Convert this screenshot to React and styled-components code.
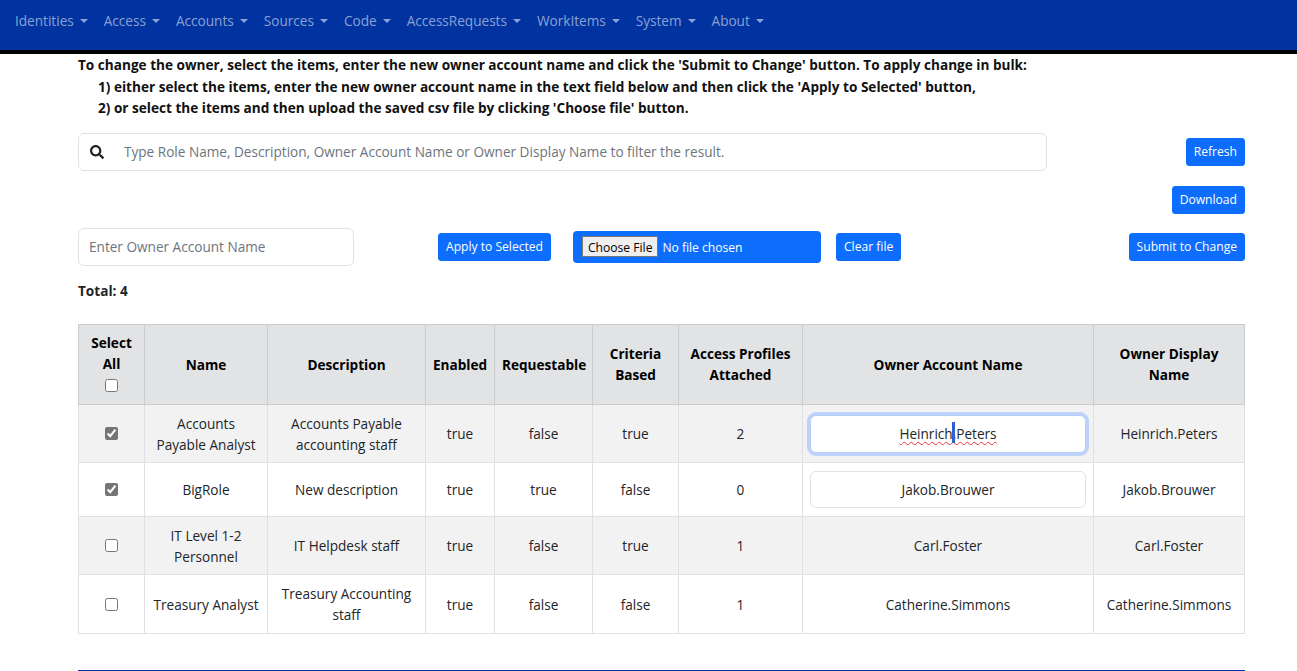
import React from 'react';
import styled, { createGlobalStyle } from 'styled-components';
import { FaSearch } from 'react-icons/fa';

const colors = {
  navy: '#0033a0',
  primary: '#0d6efd',
  text: '#212529',
  border: '#dee2e6',
  inputBorder: '#dee2e6',
  placeholder: '#6c757d',
  headBg: '#e2e3e5',
  headBorder: '#cbccce',
  stripe: '#f2f2f2',
};

const font = '"Open Sans", "Noto Sans", sans-serif';

const GlobalStyle = createGlobalStyle`
  html, body { margin: 0; padding: 0; background: #fff; }
  body {
    font-family: ${font};
    font-size: 13.6px;
    line-height: 21px;
    color: ${colors.text};
    overflow: hidden;
  }
  * { box-sizing: border-box; }
`;

const Navbar = styled.nav`
  height: 54px;
  background: ${colors.navy};
  border-bottom: 4px solid #000;
  display: flex;
  align-items: flex-start;
  padding: 10px 7px 0;
`;

const NavLink = styled.a`
  color: rgba(255, 255, 255, .55);
  padding: 0 8px;
  display: flex;
  align-items: center;
  &::after {
    content: '';
    margin-left: 6px;
    border-top: 4px solid;
    border-left: 4px solid transparent;
    border-right: 4px solid transparent;
  }
`;

const Page = styled.main`
  padding: 0 52px 0 78px;
`;

const Intro = styled.div`
  font-weight: 700;
  color: #111;
  line-height: 21.5px;
`;

const IntroStep = styled.div`
  padding-left: 20px;
`;

const SearchRow = styled.div`
  display: flex;
  justify-content: space-between;
  align-items: center;
  margin-top: 14px;
  height: 38px;
`;

const SearchGroup = styled.div`
  width: 969px;
  height: 38px;
  display: flex;
  align-items: center;
  border: 1px solid ${colors.inputBorder};
  border-radius: 6px;
`;

const SearchIcon = styled.span`
  width: 45px;
  display: flex;
  padding-left: 11px;
  color: ${colors.text};
  font-size: 14px;
`;

const TextInput = styled.input`
  font: inherit;
  color: ${colors.text};
  border: 0;
  padding: 0;
  outline: 0;
  background: transparent;
  flex: 1;
  min-width: 0;
  &::placeholder { color: ${colors.placeholder}; opacity: 1; }
`;

const Button = styled.button`
  font: inherit;
  font-size: 12.1px;
  height: 28px;
  line-height: 26px;
  padding: 0 7px;
  color: #fff;
  background: ${colors.primary};
  border: 1px solid ${colors.primary};
  border-radius: 3px;
  white-space: nowrap;
  margin-left: ${p => p.$left || 0}px;
`;

const DownloadRow = styled.div`
  display: flex;
  justify-content: flex-end;
  margin-top: 15px;
`;

const ActionRow = styled.div`
  display: flex;
  align-items: center;
  margin-top: 14px;
  height: 38px;
`;

const OwnerInput = styled.input`
  font: inherit;
  width: 276px;
  height: 38px;
  padding: 0 10px;
  color: ${colors.text};
  border: 1px solid ${colors.inputBorder};
  border-radius: 6px;
  outline: 0;
  &::placeholder { color: ${colors.placeholder}; opacity: 1; }
`;

const FileBox = styled.div`
  width: 248px;
  height: 32px;
  margin-left: 22px;
  padding: 0 9px;
  display: flex;
  align-items: center;
  background: ${colors.primary};
  border-radius: 4px;
`;

const FileInput = styled.input`
  font: inherit;
  font-size: 12.1px;
  color: #fff;
  width: 100%;
  &::file-selector-button {
    font: inherit;
    height: 21px;
    padding: 0 5px;
    margin-right: 4px;
    color: #000;
    background: #efefef;
    border: 1px solid #767676;
  }
`;

const Spacer = styled.div`
  flex: 1;
`;

const Total = styled.div`
  font-weight: 700;
  margin-top: 14px;
`;

const Table = styled.table`
  width: 1166px;
  margin-top: 23px;
  border-collapse: collapse;
  table-layout: fixed;
  text-align: center;
`;

const HeadRow = styled.tr`
  height: 80px;
`;

const HeadCell = styled.th`
  background: ${colors.headBg};
  border: 1px solid ${colors.headBorder};
  color: #000;
  font-weight: 700;
  padding: 0 7px;
  vertical-align: middle;
`;

const Row = styled.tr`
  height: ${p => p.$h}px;
  background: ${p => (p.$striped ? colors.stripe : '#fff')};
`;

const Cell = styled.td`
  border: 1px solid ${colors.border};
  padding: 1px 8px 0;
  vertical-align: middle;
`;

const Check = styled.input.attrs({ type: 'checkbox' })`
  display: block;
  width: 13px;
  height: 13px;
  margin: 3px auto;
  accent-color: #757575;
`;

const HeadCheck = styled(Check)`
  margin: 4.5px auto;
`;

const CellInput = styled.input`
  font: inherit;
  display: block;
  width: 276px;
  height: 37px;
  margin: 0 0 0 -1px;
  padding: 0;
  text-align: center;
  color: ${colors.text};
  border: 1px solid ${colors.inputBorder};
  border-radius: 6px;
  outline: 0;
`;

const FocusedInput = styled.div`
  position: relative;
  width: 276px;
  height: 38px;
  margin: 0 0 0 -1px;
  text-align: center;
  line-height: 36px;
  background: #fff;
  border: 1px solid #b5cffa;
  border-radius: 6px;
  box-shadow: 0 0 0 3px #bdd3f9;
`;

const Misspelled = styled.span`
  position: relative;
  text-decoration: underline wavy #e33;
  text-decoration-thickness: 1px;
  text-underline-offset: 2px;
`;

const Caret = styled.span`
  position: absolute;
  left: 53px;
  top: -2px;
  width: 3px;
  height: 21px;
  background: #2f5fd0;
`;

const FooterLine = styled.div`
  margin-top: 36px;
  height: 2px;
  background: ${colors.navy};
`;

const navItems = ['Identities', 'Access', 'Accounts', 'Sources', 'Code', 'AccessRequests', 'WorkItems', 'System', 'About'];

const columns = [66, 123, 158, 69, 98, 86, 124, 291, 151];

const headers = [
  'Name',
  'Description',
  'Enabled',
  'Requestable',
  'Criteria Based',
  'Access Profiles Attached',
  'Owner Account Name',
  'Owner Display Name',
];

const rows = [
  { name: 'Accounts Payable Analyst', desc: 'Accounts Payable accounting staff', enabled: 'true', requestable: 'false', criteria: 'true', profiles: 2, owner: 'Heinrich.Peters', checked: true, focused: true, h: 58 },
  { name: 'BigRole', desc: 'New description', enabled: 'true', requestable: 'true', criteria: 'false', profiles: 0, owner: 'Jakob.Brouwer', checked: true, editing: true, h: 54 },
  { name: 'IT Level 1-2 Personnel', desc: 'IT Helpdesk staff', enabled: 'true', requestable: 'false', criteria: 'true', profiles: 1, owner: 'Carl.Foster', h: 58 },
  { name: 'Treasury Analyst', desc: 'Treasury Accounting staff', enabled: 'true', requestable: 'false', criteria: 'false', profiles: 1, owner: 'Catherine.Simmons', h: 59 },
];

function OwnerCell({ row }) {
  if (row.focused) {
    return (
      <FocusedInput>
        <Misspelled>{row.owner}<Caret /></Misspelled>
      </FocusedInput>
    );
  }
  if (row.editing) return <CellInput defaultValue={row.owner} />;
  return row.owner;
}

export default function App() {
  return (
    <>
      <GlobalStyle />
      <Navbar>
        {navItems.map(item => <NavLink key={item}>{item}</NavLink>)}
      </Navbar>
      <Page>
        <Intro>
          <div>To change the owner, select the items, enter the new owner account name and click the 'Submit to Change' button. To apply change in bulk:</div>
          <IntroStep>1) either select the items, enter the new owner account name in the text field below and then click the 'Apply to Selected' button,</IntroStep>
          <IntroStep>2) or select the items and then upload the saved csv file by clicking 'Choose file' button.</IntroStep>
        </Intro>
        <SearchRow>
          <SearchGroup>
            <SearchIcon><FaSearch /></SearchIcon>
            <TextInput placeholder="Type Role Name, Description, Owner Account Name or Owner Display Name to filter the result." />
          </SearchGroup>
          <Button>Refresh</Button>
        </SearchRow>
        <DownloadRow>
          <Button>Download</Button>
        </DownloadRow>
        <ActionRow>
          <OwnerInput placeholder="Enter Owner Account Name" />
          <Button $left={84}>Apply to Selected</Button>
          <FileBox><FileInput type="file" /></FileBox>
          <Button $left={15}>Clear file</Button>
          <Spacer />
          <Button>Submit to Change</Button>
        </ActionRow>
        <Total>Total: 4</Total>
        <Table>
          <colgroup>
            {columns.map((w, i) => <col key={i} width={w} />)}
          </colgroup>
          <thead>
            <HeadRow>
              <HeadCell>Select All<HeadCheck /></HeadCell>
              {headers.map(h => <HeadCell key={h}>{h}</HeadCell>)}
            </HeadRow>
          </thead>
          <tbody>
            {rows.map((r, i) => (
              <Row key={r.name} $h={r.h} $striped={i % 2 === 0}>
                <Cell><Check defaultChecked={r.checked} /></Cell>
                <Cell>{r.name}</Cell>
                <Cell>{r.desc}</Cell>
                <Cell>{r.enabled}</Cell>
                <Cell>{r.requestable}</Cell>
                <Cell>{r.criteria}</Cell>
                <Cell>{r.profiles}</Cell>
                <Cell><OwnerCell row={r} /></Cell>
                <Cell>{r.owner}</Cell>
              </Row>
            ))}
          </tbody>
        </Table>
        <FooterLine />
      </Page>
    </>
  );
}
